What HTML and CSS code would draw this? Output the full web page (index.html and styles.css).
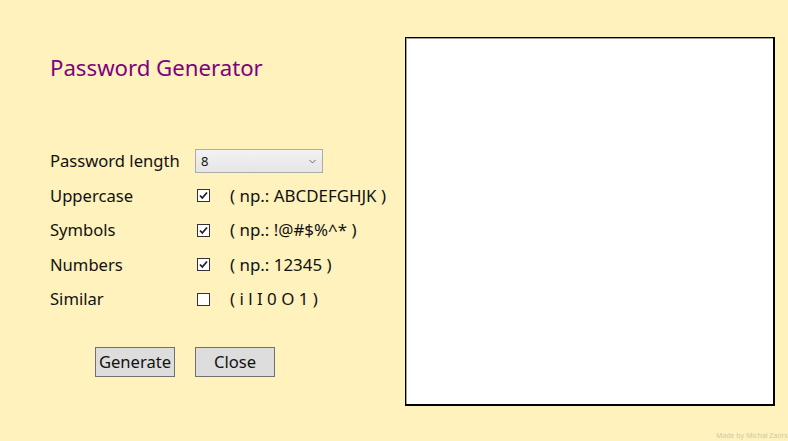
FILE: index.html
```html
<!DOCTYPE html>
<html>
<head>
<meta charset="utf-8">
<link rel="stylesheet" href="styles.css">
</head>
<body>
<div class="page">
  <div class="main">
    <div class="panel">
      <h1 class="title">Password Generator</h1>
      <div class="options">
        <div class="label">Password length</div>
        <div class="select-wrap">
          <div class="select"><span>8</span>
            <svg class="chev" width="7" height="5" viewBox="0 0 7 5"><path d="M0.5 1 L3.5 4 L6.5 1" fill="none" stroke="#6a6a6a" stroke-width="1"/></svg>
          </div>
        </div>

        <div class="label">Uppercase</div>
        <div class="cb checked"><svg width="11" height="11" viewBox="0 0 11 11"><path d="M2 5.5 L4.3 8 L9 2.5" fill="none" stroke="#222" stroke-width="1.8"/></svg></div>
        <div class="hint">( np.: ABCDEFGHJK )</div>

        <div class="label">Symbols</div>
        <div class="cb checked"><svg width="11" height="11" viewBox="0 0 11 11"><path d="M2 5.5 L4.3 8 L9 2.5" fill="none" stroke="#222" stroke-width="1.8"/></svg></div>
        <div class="hint">( np.: !@#$%^* )</div>

        <div class="label">Numbers</div>
        <div class="cb checked"><svg width="11" height="11" viewBox="0 0 11 11"><path d="M2 5.5 L4.3 8 L9 2.5" fill="none" stroke="#222" stroke-width="1.8"/></svg></div>
        <div class="hint">( np.: 12345 )</div>

        <div class="label">Similar</div>
        <div class="cb"></div>
        <div class="hint">( i l I 0 O 1 )</div>
      </div>
      <div class="buttons">
        <button class="btn">Generate</button>
        <button class="btn">Close</button>
      </div>
    </div>
    <div class="output"></div>
  </div>
  <div class="footer">Made by Michał Zaorski</div>
</div>
</body>
</html>
```
FILE: styles.css
```css
html, body {
  margin: 0;
  padding: 0;
  background: #fff2bd;
  overflow: hidden;
}
body {
  font-family: "Noto Sans", "Open Sans", sans-serif;
  color: #111;
  width: 788px;
  height: 441px;
}
.page {
  width: 788px;
  height: 441px;
  display: flex;
  flex-direction: column;
}
.main {
  display: flex;
  height: 431px;
}
.panel {
  width: 355px;
  padding-left: 50px;
  padding-top: 53px;
}
.title {
  margin: 0;
  font-weight: normal;
  font-size: 22.2px;
  line-height: 30px;
  color: #800080;
}
.options {
  margin-top: 61px;
  display: grid;
  grid-template-columns: 145px 35px auto;
  grid-auto-rows: 34.5px;
  align-items: center;
  font-size: 16.6px;
}
.label {
  line-height: 20px;
  white-space: nowrap;
}
.select-wrap {
  grid-column: 2 / span 2;
}
.select {
  border: 1px solid #acacac;
  background: linear-gradient(#f2f2f2, #e5e5e5);
  display: flex;
  align-items: center;
  justify-content: space-between;
  padding: 0 6px 0 5px;
  box-sizing: border-box;
  width: 128px;
  height: 24px;
  font-size: 13px;
}
.chev {
  display: block;
}
.cb {
  width: 13px;
  height: 13px;
  box-sizing: border-box;
  border: 1px solid #333;
  background: #fff;
  margin-left: 2px;
  display: flex;
  align-items: center;
  justify-content: center;
}
.cb svg {
  display: block;
}
.hint {
  line-height: 20px;
  white-space: nowrap;
  font-size: 16.9px;
}
.buttons {
  margin-top: 30px;
  padding-left: 45px;
  display: flex;
  gap: 20px;
}
.btn {
  width: 80px;
  height: 30px;
  border: 1px solid #707070;
  background: #dddddd;
  font-family: "Noto Sans", "Open Sans", sans-serif;
  font-size: 16.6px;
  color: #111;
  padding: 0;
  margin: 0;
}
.output {
  margin-top: 37px;
  width: 370px;
  height: 369px;
  box-sizing: border-box;
  background: #fff;
  border: 1px solid #000;
  border-bottom-width: 2px;
  border-right-width: 2px;
  box-shadow: inset 1px 1px 0 #a0a0a0;
}
.footer {
  padding-left: 716px;
  font-size: 7px;
  line-height: 10px;
  color: #d0c8a8;
  white-space: nowrap;
}
```
